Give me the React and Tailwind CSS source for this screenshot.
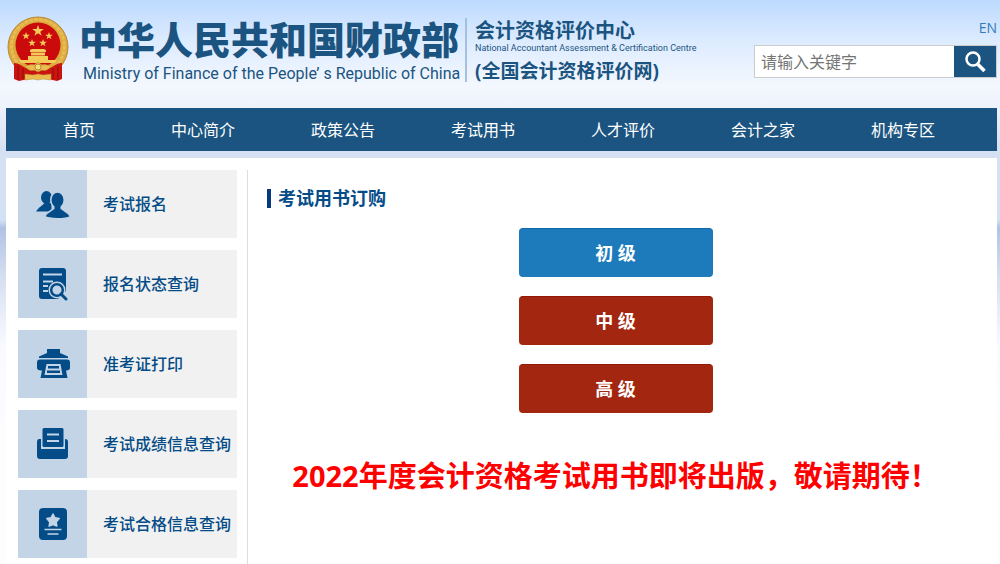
import { useState } from 'react';

const NAV_ITEMS = ['首页', '中心简介', '政策公告', '考试用书', '人才评价', '会计之家', '机构专区'];

const LEVELS = [
  { label: '初 级', className: 'bg-[#1e7bbb] border-t-[#0f6aab]' },
  { label: '中 级', className: 'bg-[#a32610] border-t-[#8f1a08]' },
  { label: '高 级', className: 'bg-[#a32610] border-t-[#8f1a08]' },
];

function UsersIcon() {
  return (
    <svg viewBox="0 0 34 34" className="size-[34px]" fill="#044c87">
      <ellipse cx="10.500" cy="10.500" rx="5.500" ry="6.500" />
      <path d="M0 24.500C3 20 6 19 8.500 16h7v8.500z" />
      <path d="M8.500 29.500C11 25 15 23.500 18 21.500h7c3 2 7 3.500 9.500 8-5 3-21 3-26 0z" stroke="#c2d4e6" strokeWidth="1.500" />
      <ellipse cx="21.500" cy="13" rx="6.700" ry="8" stroke="#c2d4e6" strokeWidth="1.500" />
      <path d="M18.500 18h6v6h-6z" />
    </svg>
  );
}

function SearchDocIcon() {
  return (
    <svg viewBox="0 0 34 34" className="size-[34px]" fill="none" stroke="#044c87">
      <path d="M6 1h21a3 3 0 0 1 3 3v20l-8 8H6a3 3 0 0 1-3-3V4a3 3 0 0 1 3-3z" fill="#044c87" stroke="none" />
      <path d="M7 7.500h19M7 14.500h10M7 19h5M7 24h5" stroke="#c2d4e6" strokeWidth="2" />
      <circle cx="21" cy="23" r="8.500" fill="#c2d4e6" stroke="none" />
      <circle cx="21" cy="23" r="5.800" strokeWidth="2.500" />
      <path d="M25 27l5 5" strokeWidth="3" strokeLinecap="round" />
    </svg>
  );
}

function PrinterIcon() {
  return (
    <svg viewBox="0 0 34 34" className="size-[34px]" fill="#044c87">
      <path d="M11 2h13v4l8 3.500v1.500H3V9.500L11 6z" />
      <path d="M4 12.500h27c2 0 3 1 3 3v5c0 2-1 3-4 3l1.500 7.500h-27L6 23.500c-4 0-5-1-5-3v-5c0-2 1-3 3-3z" />
      <path d="M10.500 17h14l2 11h-18z" fill="#c2d4e6" />
      <path d="M12 19h11v2.500H12zM11 23.500h13v2.500H11z" />
    </svg>
  );
}

function TrayIcon() {
  return (
    <svg viewBox="0 0 34 34" className="size-[34px]" fill="#044c87">
      <path d="M3 12h2v10h24V12c2 0 3 1 3 3v14c0 2-1 3-3 3H4c-2 0-3-1-3-3V15c0-2 1-3 2-3z" />
      <rect x="6.500" y="1" width="21" height="19" rx="1.500" />
      <path d="M11 7.500h12M11 14h12" stroke="#c2d4e6" strokeWidth="2" />
    </svg>
  );
}

function CertificateIcon() {
  return (
    <svg viewBox="0 0 34 34" className="size-[34px]">
      <rect x="3" y="1" width="28" height="32" rx="4" fill="#044c87" />
      <path d="M17 7l2 3.800 4.200.8-3 3.300.6 4.200-3.800-1.500-3.800 1.500.6-4.200-3-3.300 4.200-.8z" fill="#c2d4e6" stroke="#c2d4e6" strokeWidth="1.500" strokeLinejoin="round" />
      <path d="M8.500 22.500h17M11.500 27h11" stroke="#c2d4e6" strokeWidth="1.500" />
    </svg>
  );
}

const SERVICES = [
  { label: '考试报名', Icon: UsersIcon },
  { label: '报名状态查询', Icon: SearchDocIcon },
  { label: '准考证打印', Icon: PrinterIcon },
  { label: '考试成绩信息查询', Icon: TrayIcon },
  { label: '考试合格信息查询', Icon: CertificateIcon },
];

const star = 'M0-5l1.200 3.400H4.800L1.900.6 3 4 0 1.900-3 4-1.900.6-4.800-1.600h3.600z';

function Emblem() {
  return (
    <svg viewBox="0 0 62 66" className="w-[62px] h-[66px] shrink-0" aria-hidden="true">
      <circle cx="31" cy="31" r="30" fill="#dda93c" stroke="#b98a35" />
      <circle cx="31" cy="30" r="26.500" fill="none" stroke="#e7bb55" strokeWidth="3" strokeDasharray="4 1" />
      <circle cx="31" cy="29" r="22.500" fill="#cb0a0c" />
      <g fill="#f3cb58">
        <path d={star} transform="translate(31 15) scale(1.200)" />
        <path d={star} transform="translate(19 20) scale(.8)" />
        <path d={star} transform="translate(42 20) scale(.8)" />
        <path d={star} transform="translate(25 27) scale(.8)" />
        <path d={star} transform="translate(36 27) scale(.8)" />
        <path d="M23 34l2-1h12l2 1v2H23zM24 36.500h14v3H24zM21 40h20v4H21zM12 44h38l-2 3H14z" />
      </g>
      <path d="M7 47c5 0 8 3 12 5l12 2 12-2c4-2 7-5 12-5v16l-5 2-9-2H21l-9 2-5-2z" fill="#cb140f" />
      <path d="M11 50v14M16 52v11M46 52v11M51 50v14" stroke="#8d0d0a" />
      <path d="M18 50c4-1 7-2 9-1l4-3 4 3c2-1 5 0 9 1-3 5-7 5-9 4l-4 2-4-2c-2 1-6 1-9-4z" fill="#e9bd4c" stroke="#b98a35" strokeWidth=".5" />
      <path d="M18 58l8 1 5-1 5 1 8-1v6l-8-1-5 1-5-1-8 1z" fill="#e9bd4c" stroke="#b98a35" strokeWidth=".5" />
      <circle cx="31" cy="51" r="3" fill="#f7da7c" stroke="#b98a35" />
    </svg>
  );
}

function SearchBox() {
  const [keyword, setKeyword] = useState('');

  return (
    <form onSubmit={(e) => e.preventDefault()} className="flex h-[33px] w-[243px] border border-[#ccc]">
      <input
        aria-label="请输入关键字"
        className="min-w-0 flex-1 bg-white px-[6px] text-base text-[#333] outline-none placeholder:text-[#757575]"
        value={keyword}
        onChange={(e) => setKeyword(e.target.value)}
        placeholder="请输入关键字"
      />
      <button type="submit" aria-label="搜索" className="flex w-[42px] items-center justify-center bg-[#1b5480]">
        <svg viewBox="0 0 22 22" className="size-[22px]" fill="none" stroke="#fff">
          <circle cx="9" cy="8" r="6.500" strokeWidth="2.500" />
          <path d="M13.500 13l7 7" strokeWidth="3.500" />
        </svg>
      </button>
    </form>
  );
}

function Header() {
  return (
    <header className="flex h-[108px] items-start justify-between pl-px">
      <div className="flex items-start pt-4 text-[#1b5480]">
        <Emblem />
        <div className="ml-[10px] w-[380px]">
          <h1 className="text-[38px] leading-[46px] font-black whitespace-nowrap">中华人民共和国财政部</h1>
          <p className="pt-[2px] pl-1 font-['Roboto',sans-serif] text-base leading-5 whitespace-nowrap">
            Ministry of Finance of the People’ s Republic of China
          </p>
        </div>
        <div className="mt-[2px] ml-[6px] h-16 border-l-2 border-[#a3c1dc] pt-px pl-2 whitespace-nowrap">
          <p className="text-[20px] leading-6 font-bold">会计资格评价中心</p>
          <p className="font-['Roboto',sans-serif] text-[9px] leading-[10px]">National Accountant Assessment &amp; Certification Centre</p>
          <p className="pt-[6px] text-[19px] leading-6 font-bold">(全国会计资格评价网)</p>
        </div>
      </div>
      <div className="flex flex-col items-end pt-[18px]">
        <a href="#" className="mb-[7px] text-sm leading-5 text-[#337ab7]">EN</a>
        <SearchBox />
      </div>
    </header>
  );
}

function Sidebar() {
  return (
    <aside className="w-[230px] shrink-0 border-r border-[#ddd]">
      <ul className="flex flex-col gap-3">
        {SERVICES.map(({ label, Icon }) => (
          <li key={label}>
            <a href="#" className="mr-[10px] flex h-[68px] items-center bg-[#f1f1f1] text-base font-medium text-[#044c87]">
              <span className="mr-4 flex h-full w-[69px] items-center justify-center bg-[#c2d4e6]">
                <Icon />
              </span>
              {label}
            </a>
          </li>
        ))}
      </ul>
    </aside>
  );
}

export default function App() {
  return (
    <div className="h-screen overflow-hidden bg-[linear-gradient(#bddafe_0px,#dcebff_40px,#f3f7fe_85px,#eef3fc_105px,#d5e1f2_150px,#d3e1f4_220px,#b0c2e4_228px,#d5def0_275px,#f8faff_345px,#fdfdff_450px)] pr-[3px] pl-[6px] font-['Open_Sans','Noto_Sans_CJK_SC',sans-serif]">
      <Header />
      <nav className="flex h-[43px] items-center gap-[76px] bg-[#1b5480] pl-[57px] text-base whitespace-nowrap text-white">
        {NAV_ITEMS.map((item) => (
          <a key={item} href="#">{item}</a>
        ))}
      </nav>
      <main className="mt-[7px] flex min-h-screen bg-white pt-3 pl-3">
        <Sidebar />
        <section className="flex-1 pr-[33px] pl-[19px]">
          <h2 className="mt-[18px] flex items-center gap-[7px] text-lg leading-5 font-bold text-[#044c87]">
            <span className="h-[19px] w-1 bg-[#043a80]" />
            考试用书订购
          </h2>
          <div className="mt-5 flex flex-col items-center gap-[19px]">
            {LEVELS.map(({ label, className }) => (
              <button key={label} type="button" className={`h-[49px] w-[194px] rounded-sm border-t text-lg font-bold text-white ${className}`}>
                {label}
              </button>
            ))}
          </div>
          <p className="mt-10 text-center text-[29px] leading-[46px] font-bold whitespace-nowrap text-[#f00]">
            2022年度会计资格考试用书即将出版，敬请期待！
          </p>
        </section>
      </main>
    </div>
  );
}
